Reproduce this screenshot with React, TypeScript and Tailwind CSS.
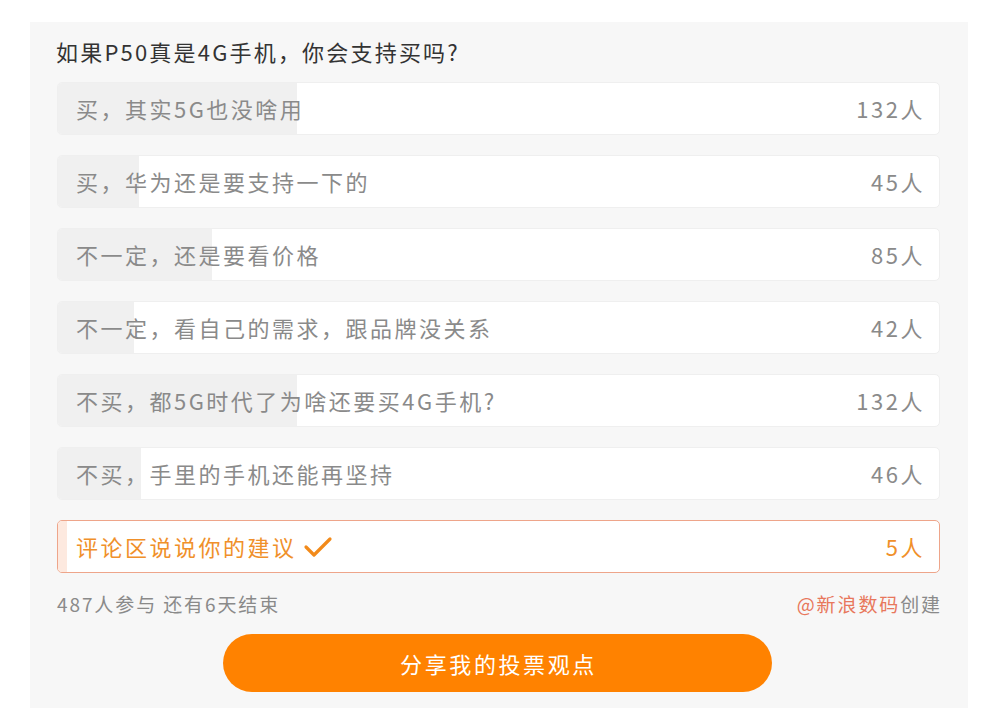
const options = [
  { label: "买，其实5G也没啥用", count: 132 },
  { label: "买，华为还是要支持一下的", count: 45 },
  { label: "不一定，还是要看价格", count: 85 },
  { label: "不一定，看自己的需求，跟品牌没关系", count: 42 },
  { label: "不买，都5G时代了为啥还要买4G手机?", count: 132 },
  { label: "不买，手里的手机还能再坚持", count: 46 },
];

const total = 487;
const font = { fontFamily: '"Noto Sans CJK SC", "Noto Sans", sans-serif' };

export default function App() {
  return (
    <div className="w-[1000px] h-[723px] bg-white pt-[22px] pl-[30px]" style={font}>
      <div className="w-[938px] h-[686px] bg-[#f7f7f7] pl-[27px] pr-[28px]">
        <div className="pt-[14px] h-[60px] text-[22px] leading-[30px] text-[#333] tracking-[2.2px] -ml-[1px]">
          如果P50真是4G手机，你会支持买吗?
        </div>

        <div className="flex flex-col gap-[20px]">
          {options.map((o) => (
            <div
              key={o.label}
              className="relative h-[53px] bg-white rounded-[5px] border border-[#efefef] overflow-hidden"
            >
              <div
                className="absolute left-0 top-0 bottom-0 bg-[#f0f0f0]"
                style={{ width: `${(o.count / total) * 100}%` }}
              />
              <div className="relative h-full flex items-center justify-between pl-[18px] pr-[14px] text-[22px] text-[#8a8a8a] tracking-[2.5px]">
                <span>{o.label}</span>
                <span>{o.count}人</span>
              </div>
            </div>
          ))}

          <div className="relative h-[53px] bg-white rounded-[5px] border border-[#eea58a] overflow-hidden">
            <div
              className="absolute left-0 top-0 bottom-0 bg-[#fde9df]"
              style={{ width: `${(5 / total) * 100}%` }}
            />
            <div className="relative h-full flex items-center justify-between pl-[18px] pr-[14px] text-[22px] text-[#f0902a] tracking-[2.5px]">
              <span className="flex items-center gap-[6px]">
                评论区说说你的建议
                <svg width="30" height="22" viewBox="0 0 30 22" fill="none">
                  <path d="M3 11 L11 19 L27 3" stroke="#f28a1a" strokeWidth="3.2" strokeLinecap="round" strokeLinejoin="round" />
                </svg>
              </span>
              <span>5人</span>
            </div>
          </div>
        </div>

        <div className="mt-[19px] h-[24px] flex items-center justify-between text-[19px] text-[#8a8a8a] tracking-[1.9px]">
          <span>487人参与 还有6天结束</span>
          <span className="-mr-[2px]">
            <span className="text-[#e8775c]">@新浪数码</span>创建
          </span>
        </div>

        <div className="mt-[18px] flex justify-center">
          <button className="w-[549px] h-[58px] rounded-full bg-[#ff8200] text-white text-[22px] tracking-[2.6px] -ml-[2px] pl-[2px]">
            分享我的投票观点
          </button>
        </div>
      </div>
    </div>
  );
}
